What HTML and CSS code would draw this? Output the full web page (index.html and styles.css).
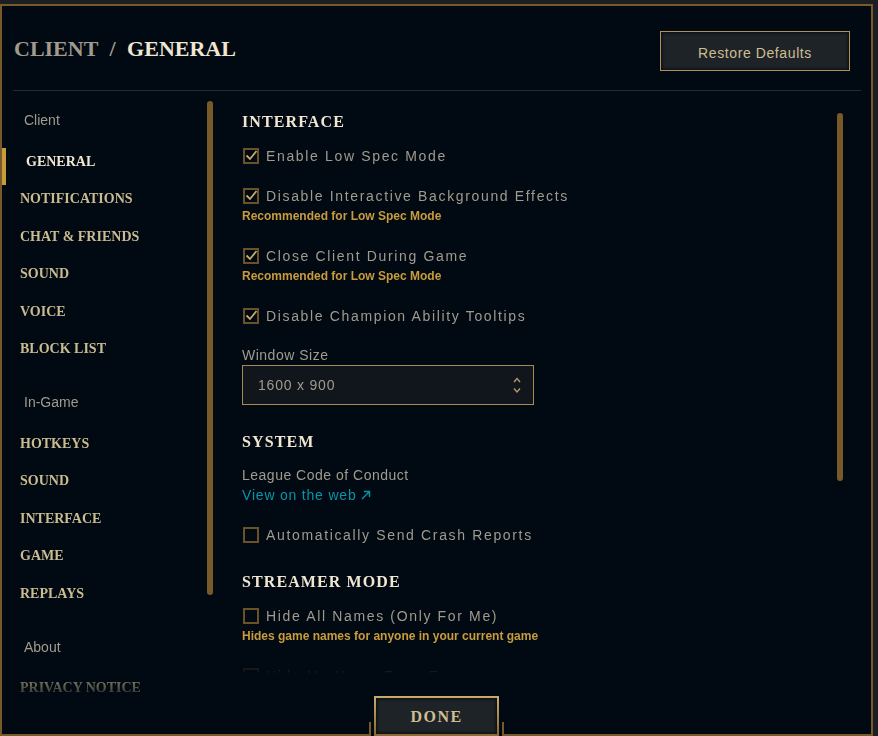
FILE: index.html
```html
<!DOCTYPE html>
<html lang="en">
<head>
<meta charset="utf-8">
<title>Client / General</title>
<link rel="stylesheet" href="styles.css">
</head>
<body>
<div class="frame">
  <header class="head">
    <h1 class="title"><span class="dim">CLIENT</span> <span class="dim">/</span> GENERAL</h1>
    <button class="btn-restore">Restore Defaults</button>
  </header>
  <div class="divider"></div>
  <div class="main">
    <nav class="nav">
      <div class="nav-list">
        <div class="group">Client</div>
        <div class="item active">GENERAL</div>
        <div class="item">NOTIFICATIONS</div>
        <div class="item">CHAT &amp; FRIENDS</div>
        <div class="item">SOUND</div>
        <div class="item">VOICE</div>
        <div class="item">BLOCK LIST</div>
        <div class="group sep">In-Game</div>
        <div class="item">HOTKEYS</div>
        <div class="item">SOUND</div>
        <div class="item">INTERFACE</div>
        <div class="item">GAME</div>
        <div class="item">REPLAYS</div>
        <div class="group sep">About</div>
        <div class="item">PRIVACY NOTICE</div>
      </div>
      <div class="thumb nav-thumb"></div>
    </nav>
    <section class="content">
      <div class="scroll">
        <h2 class="sec">INTERFACE</h2>
        <div class="opt">
          <div class="check-row"><span class="box"><svg viewBox="0 0 16 16" width="16" height="16"><path d="M2.5 7.5 L6 11 L12.5 3" fill="none" stroke="#c8aa6e" stroke-width="1.8"/></svg></span><span class="label">Enable Low Spec Mode</span></div>
        </div>
        <div class="opt">
          <div class="check-row"><span class="box"><svg viewBox="0 0 16 16" width="16" height="16"><path d="M2.5 7.5 L6 11 L12.5 3" fill="none" stroke="#c8aa6e" stroke-width="1.8"/></svg></span><span class="label">Disable Interactive Background Effects</span></div>
          <div class="sub">Recommended for Low Spec Mode</div>
        </div>
        <div class="opt">
          <div class="check-row"><span class="box"><svg viewBox="0 0 16 16" width="16" height="16"><path d="M2.5 7.5 L6 11 L12.5 3" fill="none" stroke="#c8aa6e" stroke-width="1.8"/></svg></span><span class="label">Close Client During Game</span></div>
          <div class="sub">Recommended for Low Spec Mode</div>
        </div>
        <div class="opt">
          <div class="check-row"><span class="box"><svg viewBox="0 0 16 16" width="16" height="16"><path d="M2.5 7.5 L6 11 L12.5 3" fill="none" stroke="#c8aa6e" stroke-width="1.8"/></svg></span><span class="label">Disable Champion Ability Tooltips</span></div>
        </div>
        <div class="field-label">Window Size</div>
        <div class="select">
          <span class="select-value">1600 x 900</span>
          <svg class="select-arrows" viewBox="0 0 8 18" width="8" height="18"><path d="M1 6 L4 2.5 L7 6 M1 12.5 L4 16 L7 12.5" fill="none" stroke="#b39a68" stroke-width="1.4"/></svg>
        </div>

        <h2 class="sec later">SYSTEM</h2>
        <div class="info">
          <div class="info-text">League Code of Conduct</div>
          <div class="link">View on the web <svg class="ext" viewBox="0 0 10 10" width="10" height="10"><path d="M1 9 L8.5 1.5 M3 1.5 H8.5 V7" fill="none" stroke="#0596aa" stroke-width="1.4"/></svg></div>
        </div>
        <div class="opt">
          <div class="check-row"><span class="box"></span><span class="label">Automatically Send Crash Reports</span></div>
        </div>

        <h2 class="sec later">STREAMER MODE</h2>
        <div class="opt">
          <div class="check-row"><span class="box"></span><span class="label">Hide All Names (Only For Me)</span></div>
          <div class="sub">Hides game names for anyone in your current game</div>
        </div>
        <div class="opt">
          <div class="check-row"><span class="box"></span><span class="label">Hide My Name From Everyone</span></div>
        </div>
      </div>
      <div class="thumb content-thumb"></div>
    </section>
  </div>
  <footer class="foot">
    <div class="fline"></div>
    <div class="tick"></div>
    <button class="btn-done">DONE</button>
    <div class="tick"></div>
    <div class="fline"></div>
  </footer>
</div>
</body>
</html>
```

FILE: styles.css
```css
html, body {
  margin: 0;
  padding: 0;
}
body {
  width: 878px;
  height: 736px;
  overflow: hidden;
  background: #1b1f23;
  font-family: "Liberation Sans", Arial, sans-serif;
}
.frame {
  box-sizing: border-box;
  width: 873px;
  height: 732px;
  margin-top: 4px;
  border: 2px solid #785a28;
  border-bottom: 0;
  background: #010a13;
  display: flex;
  flex-direction: column;
}
.head {
  box-sizing: border-box;
  height: 84px;
  padding: 25px 21px 0 12px;
  display: flex;
  justify-content: space-between;
  align-items: flex-start;
}
.title {
  margin: 3px 0 0 0;
  font-family: "Liberation Serif", "Times New Roman", serif;
  font-weight: bold;
  font-size: 22px;
  line-height: 30px;
  letter-spacing: 0;
  word-spacing: 6px;
  color: #f0e6d2;
}
.title .dim {
  color: #a09b8c;
}
.btn-restore {
  box-sizing: border-box;
  width: 190px;
  height: 40px;
  border: 1px solid #b09158;
  background: #1e2328;
  box-shadow: inset 0 0 3px 1px #0a0d10;
  color: #cdbe91;
  font-family: "Liberation Sans", Arial, sans-serif;
  font-size: 14px;
  letter-spacing: 0.6px;
  padding: 3px 0 0 0;
}
.divider {
  height: 1px;
  margin: 0 10px 0 11px;
  background: #262b31;
}
.main {
  height: 605px;
  display: flex;
}
.nav {
  display: flex;
}
.nav-list {
  box-sizing: border-box;
  width: 205px;
  height: 605px;
  padding-top: 19px;
  overflow: hidden;
  -webkit-mask-image: linear-gradient(to bottom, #000 0, #000 575px, rgba(0,0,0,0.2) 605px);
  mask-image: linear-gradient(to bottom, #000 0, #000 575px, rgba(0,0,0,0.2) 605px);
}
.group {
  height: 20px;
  line-height: 20px;
  padding-left: 22px;
  margin-bottom: 17.5px;
  font-size: 14px;
  color: #a09b8c;
}
.group.sep {
  margin-top: 19.5px;
}
.item {
  box-sizing: border-box;
  height: 37.5px;
  padding: 6px 0 0 18px;
  line-height: 16px;
  font-family: "Liberation Serif", "Times New Roman", serif;
  font-weight: bold;
  font-size: 14px;
  color: #cabb90;
}
.item.active {
  border-left: 4px solid #c89b3c;
  padding-left: 20px;
  color: #f0e6d2;
}
.thumb {
  width: 6px;
  border-radius: 3px;
  background: #785a28;
}
.nav-thumb {
  margin-top: 10px;
  height: 494px;
}
.content {
  margin-left: 29px;
  display: flex;
}
.scroll {
  box-sizing: border-box;
  width: 595px;
  height: 605px;
  padding-top: 18px;
  overflow: hidden;
  -webkit-mask-image: linear-gradient(to bottom, #000 0, #000 560px, transparent 583px);
  mask-image: linear-gradient(to bottom, #000 0, #000 560px, transparent 583px);
}
.content-thumb {
  margin-top: 22px;
  height: 368px;
}
.sec {
  margin: 0 0 13px 0;
  padding-top: 1px;
  height: 23px;
  font-family: "Liberation Serif", "Times New Roman", serif;
  font-weight: bold;
  font-size: 16px;
  line-height: 24px;
  letter-spacing: 1.1px;
  color: #f0e6d2;
}
.sec.later {
  margin-top: 24px;
}
.opt {
  margin-bottom: 20px;
}
.check-row {
  display: flex;
  align-items: center;
  height: 20px;
  gap: 7px;
}
.box {
  box-sizing: border-box;
  width: 16px;
  height: 16px;
  margin-left: 1px;
  border: 2px solid #6a5128;
  display: block;
}
.box svg {
  display: block;
  margin: -2px 0 0 -1px;
}
.label {
  font-size: 14px;
  letter-spacing: 1.65px;
  color: #a09b8c;
  white-space: nowrap;
}
.sub {
  font-size: 12px;
  font-weight: bold;
  line-height: 20px;
  color: #c89b3c;
}
.field-label {
  font-size: 14px;
  line-height: 18px;
  letter-spacing: 0.5px;
  color: #a09b8c;
}
.select {
  box-sizing: border-box;
  margin-top: 1px;
  width: 292px;
  height: 40px;
  border: 1px solid #a68a55;
  background: #10161c;
  display: flex;
  align-items: center;
  justify-content: space-between;
  padding: 0 12px 0 15px;
}
.select-value {
  font-size: 14px;
  letter-spacing: 0.8px;
  color: #a09b8c;
}
.select-arrows {
  display: block;
}
.info {
  margin-top: -1px;
  margin-bottom: 20px;
}
.info-text {
  font-size: 14px;
  line-height: 20px;
  letter-spacing: 0.5px;
  color: #a09b8c;
}
.link {
  font-size: 14px;
  line-height: 20px;
  letter-spacing: 0.8px;
  color: #0596aa;
  display: flex;
  align-items: center;
  gap: 5px;
}
.ext {
  display: block;
}
.foot {
  height: 40px;
  display: flex;
  align-items: flex-end;
}
.fline {
  flex: 1;
  height: 2px;
  background: #785a28;
}
.tick {
  width: 2px;
  height: 14px;
  background: #785a28;
}
.btn-done {
  box-sizing: border-box;
  width: 125px;
  height: 40px;
  margin: 0 3px;
  padding: 1px 0 0 0;
  border: 2px solid #c8aa6e;
  border-image: linear-gradient(to bottom, #c8aa6e, #8a6a32) 1;
  background: #1e2328;
  box-shadow: inset 0 0 3px 1px #0a0d10;
  font-family: "Liberation Serif", "Times New Roman", serif;
  font-weight: bold;
  font-size: 16px;
  letter-spacing: 1.5px;
  color: #cdbe91;
}
```
